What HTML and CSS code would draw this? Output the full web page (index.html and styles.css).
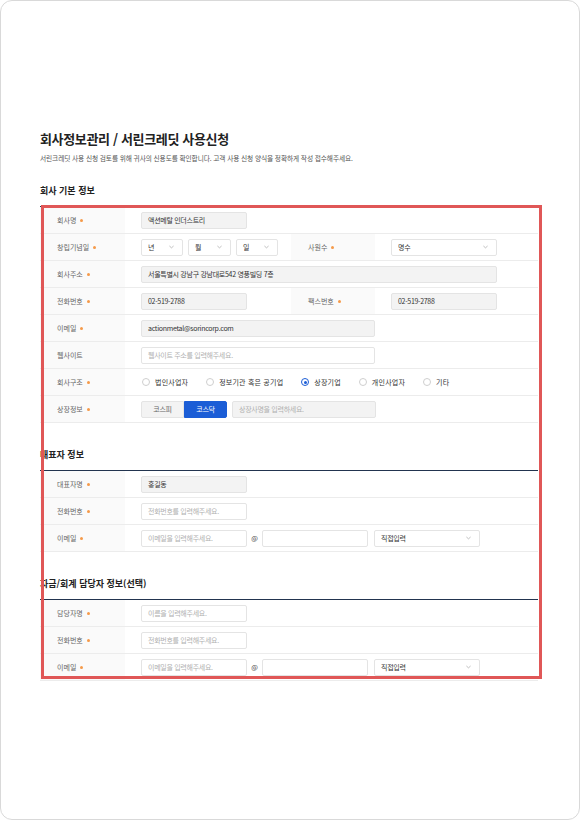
FILE: index.html
```html
<!DOCTYPE html>
<html lang="ko">
<head>
<meta charset="utf-8">
<title>회사정보관리 / 서린크레딧 사용신청</title>
<link rel="stylesheet" href="styles.css">
</head>
<body>
<div class="card">
  <h1 class="title">회사정보관리 / 서린크레딧 사용신청</h1>
  <p class="desc">서린크레딧 사용 신청 검토를 위해 귀사의 신용도를 확인합니다. 고객 사용 신청 양식을 정확하게 작성 접수해주세요.</p>

  <h2 class="sec-title first">회사 기본 정보</h2>
  <div class="table">
    <div class="row">
      <div class="label">회사명<span class="req"></span></div>
      <div class="value span3"><div class="field filled w106">액션메탈 인더스트리</div></div>
    </div>
    <div class="row">
      <div class="label">창립기념일<span class="req"></span></div>
      <div class="value gap5">
        <div class="select w42">년<svg class="chev" viewBox="0 0 6 4"><polyline points="0.5,0.8 3,3 5.5,0.8"/></svg></div>
        <div class="select w43">월<svg class="chev" viewBox="0 0 6 4"><polyline points="0.5,0.8 3,3 5.5,0.8"/></svg></div>
        <div class="select w42">일<svg class="chev" viewBox="0 0 6 4"><polyline points="0.5,0.8 3,3 5.5,0.8"/></svg></div>
      </div>
      <div class="label">사원수<span class="req"></span></div>
      <div class="value"><div class="select w106">명수<svg class="chev" viewBox="0 0 6 4"><polyline points="0.5,0.8 3,3 5.5,0.8"/></svg></div></div>
    </div>
    <div class="row">
      <div class="label">회사주소<span class="req"></span></div>
      <div class="value span3"><div class="field filled w356">서울특별시 강남구 강남대로542 영풍빌딩 7층</div></div>
    </div>
    <div class="row">
      <div class="label">전화번호<span class="req"></span></div>
      <div class="value"><div class="field filled w106">02-519-2788</div></div>
      <div class="label">팩스번호<span class="req"></span></div>
      <div class="value"><div class="field filled w106">02-519-2788</div></div>
    </div>
    <div class="row">
      <div class="label">이메일<span class="req"></span></div>
      <div class="value span3"><div class="field filled w234">actionmetal@sorincorp.com</div></div>
    </div>
    <div class="row">
      <div class="label">웹사이트</div>
      <div class="value span3"><div class="field ph w234">웹사이트 주소를 입력해주세요.</div></div>
    </div>
    <div class="row">
      <div class="label">회사구조<span class="req"></span></div>
      <div class="value span3 radios">
        <span class="radio"><span class="dot"></span>법인사업자</span>
        <span class="radio"><span class="dot"></span>정보기관 혹은 공기업</span>
        <span class="radio on"><span class="dot"></span>상장기업</span>
        <span class="radio"><span class="dot"></span>개인사업자</span>
        <span class="radio"><span class="dot"></span>기타</span>
      </div>
    </div>
    <div class="row">
      <div class="label">상장정보<span class="req"></span></div>
      <div class="value span3 gap5">
        <div class="seg"><span class="seg-btn">코스피</span><span class="seg-btn active">코스닥</span></div>
        <div class="field filled ph w144">상장사명을 입력하세요.</div>
      </div>
    </div>
  </div>

  <h2 class="sec-title">대표자 정보</h2>
  <div class="table">
    <div class="row">
      <div class="label">대표자명<span class="req"></span></div>
      <div class="value span3"><div class="field filled w106">홍길동</div></div>
    </div>
    <div class="row">
      <div class="label">전화번호<span class="req"></span></div>
      <div class="value span3"><div class="field ph w106">전화번호를 입력해주세요.</div></div>
    </div>
    <div class="row">
      <div class="label">이메일<span class="req"></span></div>
      <div class="value span3 email">
        <div class="field ph w106">이메일을 입력해주세요.</div>
        <span class="at">@</span>
        <div class="field w106"></div>
        <div class="select w106 ml2">직접입력<svg class="chev" viewBox="0 0 6 4"><polyline points="0.5,0.8 3,3 5.5,0.8"/></svg></div>
      </div>
    </div>
  </div>

  <h2 class="sec-title">자금/회계 담당자 정보(선택)</h2>
  <div class="table">
    <div class="row">
      <div class="label">담당자명<span class="req"></span></div>
      <div class="value span3"><div class="field ph w106">이름을 입력해주세요.</div></div>
    </div>
    <div class="row">
      <div class="label">전화번호<span class="req"></span></div>
      <div class="value span3"><div class="field ph w106">전화번호를 입력해주세요.</div></div>
    </div>
    <div class="row">
      <div class="label">이메일<span class="req"></span></div>
      <div class="value span3 email">
        <div class="field ph w106">이메일을 입력해주세요.</div>
        <span class="at">@</span>
        <div class="field w106"></div>
        <div class="select w106 ml2">직접입력<svg class="chev" viewBox="0 0 6 4"><polyline points="0.5,0.8 3,3 5.5,0.8"/></svg></div>
      </div>
    </div>
  </div>

  <div class="highlight"></div>
</div>
</body>
</html>
```

FILE: styles.css
```css
* { box-sizing: border-box; }
html, body { margin: 0; padding: 0; background: #ffffff; }
body {
  font-family: "Noto Sans CJK KR", "Noto Sans", sans-serif;
  color: #333;
}
.card {
  position: relative;
  width: 580px;
  height: 820px;
  border: 1px solid #d9d9d9;
  border-radius: 12px;
  background: #fff;
  padding: 129px 41px 0 39px;
}
.title {
  margin: 0;
  font-size: 13px;
  line-height: 18px;
  font-weight: 700;
  color: #222;
  letter-spacing: -0.35px;
}
.desc {
  margin: 5px 0 0;
  font-size: 6.7px;
  line-height: 10px;
  color: #555;
  letter-spacing: -0.1px;
}
.sec-title {
  margin: 26px 0 0;
  font-size: 9px;
  line-height: 12px;
  font-weight: 700;
  color: #222;
}
.sec-title.first { margin-top: 22px; }
.table {
  margin-top: 9px;
  border-top: 1px solid #22344f;
}
.row {
  display: grid;
  grid-template-columns: 85px 166px 84px 1fr;
  height: 27px;
  border-bottom: 1px solid #ececec;
}
.label {
  background: #fafafa;
  display: flex;
  align-items: center;
  padding-left: 17px;
  font-size: 7px;
  color: #666;
}
.req {
  width: 3px;
  height: 3px;
  border-radius: 50%;
  background: #f59a4a;
  margin-left: 4px;
}
.value {
  display: flex;
  align-items: center;
  padding-left: 16px;
  font-size: 7px;
  color: #333;
}
.span3 { grid-column: 2 / -1; }
.gap5 { gap: 5px; }
.field {
  height: 17px;
  border: 1px solid #e4e4e4;
  border-radius: 2px;
  background: #fff;
  display: flex;
  align-items: center;
  padding-left: 6px;
  font-size: 7px;
  letter-spacing: -0.3px;
  color: #333;
  white-space: nowrap;
}
.field.filled { background: #f3f3f3; }
.field.ph { color: #b0b0b0; }
.w106 { width: 106px; }
.w234 { width: 234px; }
.w356 { width: 356px; }
.w144 { width: 144px; }
.w42 { width: 42px; }
.w43 { width: 43px; }
.select {
  height: 17px;
  border: 1px solid #e4e4e4;
  border-radius: 2px;
  background: #fff;
  display: flex;
  align-items: center;
  justify-content: space-between;
  padding: 0 8px 0 6px;
  font-size: 7px;
  letter-spacing: -0.3px;
  color: #333;
}
.chev {
  width: 5px;
  height: 4px;
  fill: none;
  stroke: #a0a0a0;
  stroke-width: 0.8;
}
.radios { gap: 17px; }
.radio {
  display: inline-flex;
  align-items: center;
  gap: 5px;
  font-size: 7px;
  letter-spacing: 0.2px;
  color: #333;
  padding-left: 1px;
}
.radio .dot {
  width: 8px;
  height: 8px;
  border-radius: 50%;
  border: 1px solid #cfcfcf;
  background: #fff;
  position: relative;
}
.radio.on .dot {
  border-color: #1b5dd6;
}
.radio.on .dot::after {
  content: "";
  position: absolute;
  left: 1.5px;
  top: 1.5px;
  width: 3px;
  height: 3px;
  border-radius: 50%;
  background: #1b5dd6;
}
.seg {
  display: flex;
  height: 17px;
}
.seg-btn {
  width: 43px;
  display: flex;
  align-items: center;
  justify-content: center;
  font-size: 7px;
  letter-spacing: -0.3px;
  color: #666;
  background: #f3f3f3;
  border: 1px solid #e4e4e4;
  border-radius: 2px 0 0 2px;
}
.seg-btn.active {
  background: #1b5dd6;
  border-color: #1b5dd6;
  color: #fff;
  border-radius: 0 2px 2px 0;
}
.email { gap: 0; }
.at {
  width: 15px;
  text-align: center;
  font-size: 7px;
  color: #444;
}
.ml2 { margin-left: 6px; }
.highlight {
  position: absolute;
  left: 40px;
  top: 204px;
  width: 501px;
  height: 474px;
  border: 3px solid #e05757;
  pointer-events: none;
}
```
